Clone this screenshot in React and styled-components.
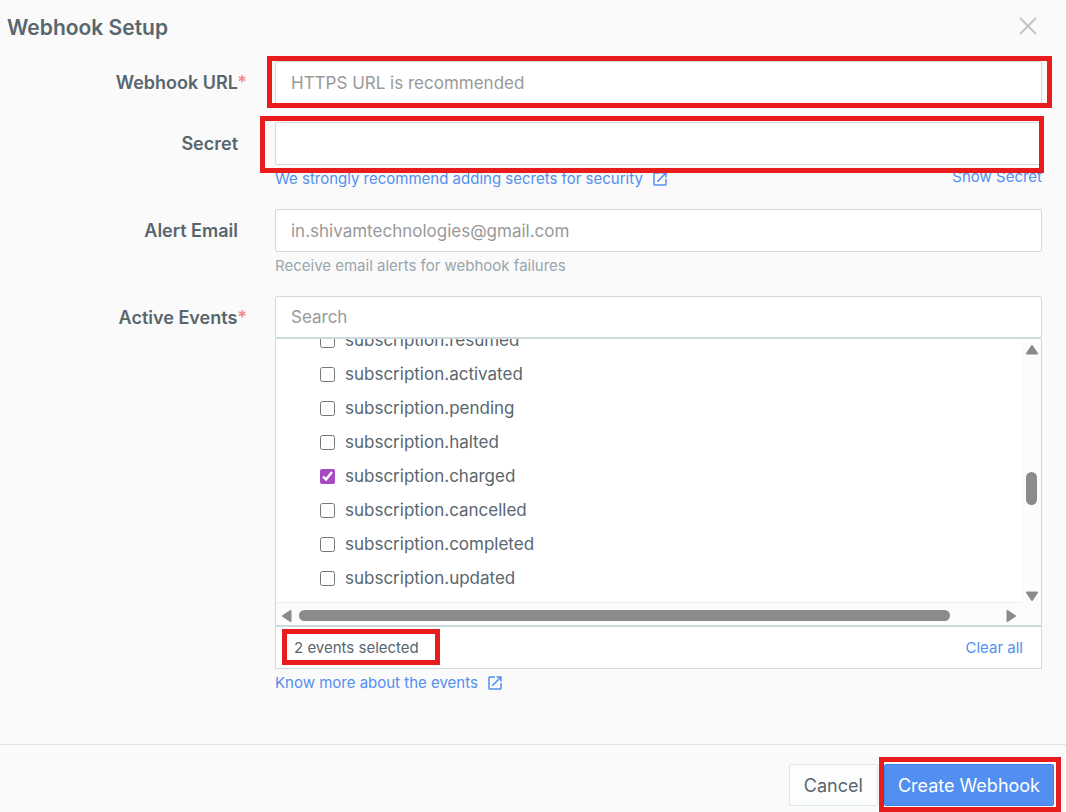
import { useState } from 'react';
import styled, { createGlobalStyle } from 'styled-components';
import { MdOpenInNew } from 'react-icons/md';

const GlobalStyle = createGlobalStyle`
  * {
    box-sizing: border-box;
  }
  body {
    margin: 0;
    background: #fafafa;
    color: #58666e;
    font-family: Inter, "Liberation Sans", sans-serif;
    font-size: 18px;
  }
  input, button {
    font-family: inherit;
    font-size: inherit;
  }
`;

const Dialog = styled.form`
  display: flex;
  flex-direction: column;
  min-height: 100vh;
`;

const Header = styled.header`
  display: flex;
  align-items: center;
  justify-content: space-between;
  height: 52px;
  padding: 0 28px 0 7px;
`;

const Title = styled.h1`
  margin: 0;
  padding-top: 2px;
  font-size: 21px;
  font-weight: 600;
`;

const CloseButton = styled.button`
  display: flex;
  padding: 0;
  border: 0;
  background: none;
  color: #c4c4c4;
  cursor: pointer;
`;

const Body = styled.main`
  display: flex;
  flex: 1;
  flex-direction: column;
  gap: 18px;
  padding: 9px 24px 48px 0;
`;

const Row = styled.div`
  display: grid;
  grid-template-columns: 247px minmax(0, 1fr);
  column-gap: 28px;
`;

const Label = styled.label`
  padding-right: ${(props) => (props.$required ? '0' : '9px')};
  font-weight: 600;
  line-height: 43px;
  text-align: right;
`;

const Star = styled.span`
  color: #f08c8c;
`;

const InputWrap = styled.div`
  position: relative;
`;

const Input = styled.input`
  display: block;
  width: 100%;
  height: ${(props) => props.$height || '43px'};
  padding: 0 15px;
  border: 1px solid #cfdadd;
  border-radius: 2px;
  background: #fff;
  color: #58666e;
  font-size: 17px;
  outline: 0;

  &::placeholder {
    color: #999;
    opacity: 1;
  }
`;

// red frame lying over the thing it points at
const Highlight = styled.span`
  position: absolute;
  z-index: 1;
  inset: ${(props) => props.$inset};
  border: 5px solid #e81c1c;
  pointer-events: none;
`;

const Help = styled.div`
  display: flex;
  justify-content: space-between;
  height: 26px;
  padding-top: 2px;
  color: #98a6ad;
  font-size: 15px;
  line-height: 24px;
`;

const Link = styled.a`
  display: inline-flex;
  align-items: center;
  gap: 8px;
  color: #528ff0;
  text-decoration: none;
`;

const TextButton = styled.button`
  padding: 0;
  border: 0;
  background: none;
  color: #528ff0;
  font-size: 15px;
  line-height: 20px;
  align-self: ${(props) => props.$align || 'center'};
  cursor: pointer;
`;

const EventsBox = styled.div`
  border: 1px solid #cfdadd;
  background: #fff;
`;

const ScrollArea = styled.div`
  display: grid;
  grid-template-columns: minmax(0, 1fr) 19px;
  grid-template-rows: 264px 22px;
  border-bottom: 2px solid #cfdadd;
`;

const EventList = styled.ul`
  display: flex;
  flex-direction: column;
  justify-content: flex-end;
  margin: 0;
  padding: 0 0 7px 44px;
  border-bottom: 1px solid #ececec;
  font-size: 17px;
  list-style: none;
  overflow: hidden;
`;

const EventItem = styled.li`
  flex: none;
`;

const EventLabel = styled.label`
  display: flex;
  align-items: center;
  gap: 10px;
  height: 34px;
`;

const Checkbox = styled.input`
  width: 15px;
  height: 15px;
  margin: 0;
  accent-color: #a84bc2;
`;

const VerticalBar = styled.div`
  display: flex;
  flex-direction: column;
  align-items: center;
  padding: 5px 0 1px;
  background: #fcfcfc;
`;

const HorizontalBar = styled.div`
  display: flex;
  grid-column: 1 / -1;
  align-items: center;
  padding: 3px 24px 0 5px;
  background: #fcfcfc;
`;

const Thumb = styled.div`
  flex: ${(props) => props.$size};
  min-width: 11px;
  border-radius: 6px;
  background: #8b8b8b;
  ${(props) => (props.$vertical ? 'width: 11px;' : 'height: 11px; margin-left: 6px;')}
`;

const Track = styled.div`
  flex: ${(props) => props.$size};
`;

const Arrow = styled.svg`
  flex: none;
  display: block;
  fill: #8b8b8b;
  stroke: #8b8b8b;
  stroke-width: 2;
  stroke-linejoin: round;
`;

const Summary = styled.div`
  display: flex;
  align-items: center;
  justify-content: space-between;
  height: 41px;
  padding: 0 18px;
  font-size: 15px;
`;

const Count = styled.span`
  position: relative;
  line-height: 20px;
`;

const Footer = styled.footer`
  display: flex;
  justify-content: flex-end;
  gap: 6px;
  padding: 19px 12px 6px;
  border-top: 1px solid #e2e5e6;
`;

const Button = styled.button`
  position: relative;
  min-width: 89px;
  height: 42px;
  padding: 0 13px;
  border: 1px solid ${(props) => (props.$primary ? '#3f82ee' : '#dee5e7')};
  border-radius: 2px;
  background: ${(props) => (props.$primary ? '#528ff0' : '#fcfdfd')};
  color: ${(props) => (props.$primary ? '#fff' : '#58666e')};
  cursor: pointer;
`;

const ARROWS = {
  up: 'M6 2 L11 9.5 H1 Z',
  down: 'M6 10 L11 2.5 H1 Z',
  left: 'M2 6 L9.5 1 V11 Z',
  right: 'M10 6 L2.5 1 V11 Z',
};

const ScrollArrow = ({ dir }) => (
  <Arrow width="12" height="12" viewBox="0 0 12 12" aria-hidden="true">
    <path d={ARROWS[dir]} />
  </Arrow>
);

const EVENTS = ['resumed', 'activated', 'pending', 'halted', 'charged', 'cancelled', 'completed', 'updated'];

function App() {
  let [selected, setSelected] = useState(['payment.captured', 'subscription.charged']);
  let [showSecret, setShowSecret] = useState(false);

  const toggle = (name) => {
    setSelected(selected.includes(name) ? selected.filter((e) => e !== name) : [...selected, name]);
  };

  return (
    <Dialog onSubmit={(e) => e.preventDefault()}>
      <GlobalStyle />
      <Header>
        <Title>Webhook Setup</Title>
        <CloseButton type="button" aria-label="Close">
          <svg width="20" height="20" viewBox="0 0 20 20" fill="none" stroke="currentColor" strokeWidth="2">
            <path d="M2 2 L18 18 M18 2 L2 18" />
          </svg>
        </CloseButton>
      </Header>

      <Body>
        <Row>
          <Label htmlFor="url" $required>Webhook URL<Star>*</Star></Label>
          <InputWrap>
            <Input id="url" type="text" placeholder="HTTPS URL is recommended" />
            <Highlight $inset="-5px -10px -4px -8px" />
          </InputWrap>
        </Row>

        <Row>
          <Label htmlFor="secret">Secret</Label>
          <div>
            <InputWrap>
              <Input id="secret" type={showSecret ? 'text' : 'password'} />
              <Highlight $inset="-6px -2px -8px -15px" />
            </InputWrap>
            <Help>
              <Link href="#secrets">
                We strongly recommend adding secrets for security
                <MdOpenInNew size={18} />
              </Link>
              <TextButton type="button" $align="flex-start" onClick={() => setShowSecret(!showSecret)}>
                Show Secret
              </TextButton>
            </Help>
          </div>
        </Row>

        <Row>
          <Label htmlFor="email">Alert Email</Label>
          <div>
            <Input id="email" type="email" placeholder="in.shivamtechnologies@gmail.com" />
            <Help>Receive email alerts for webhook failures</Help>
          </div>
        </Row>

        <Row>
          <Label htmlFor="search" $required>Active Events<Star>*</Star></Label>
          <div>
            <Input id="search" type="text" placeholder="Search" $height="42px" />
            <EventsBox>
              <ScrollArea>
                <EventList>
                  {EVENTS.map((event) => {
                    const name = `subscription.${event}`;
                    return (
                      <EventItem key={name}>
                        <EventLabel>
                          <Checkbox type="checkbox" checked={selected.includes(name)} onChange={() => toggle(name)} />
                          {name}
                        </EventLabel>
                      </EventItem>
                    );
                  })}
                </EventList>
                <VerticalBar>
                  <ScrollArrow dir="up" />
                  <Track $size={116} />
                  <Thumb $vertical $size={33} />
                  <Track $size={85} />
                  <ScrollArrow dir="down" />
                </VerticalBar>
                <HorizontalBar>
                  <ScrollArrow dir="left" />
                  <Thumb $size={651} />
                  <Track $size={55} />
                  <ScrollArrow dir="right" />
                </HorizontalBar>
              </ScrollArea>
              <Summary>
                <Count>
                  {selected.length} events selected
                  <Highlight $inset="-9px -21px -7px -12px" />
                </Count>
                <TextButton type="button" onClick={() => setSelected([])}>Clear all</TextButton>
              </Summary>
            </EventsBox>
            <Help>
              <Link href="#events">
                Know more about the events
                <MdOpenInNew size={18} />
              </Link>
            </Help>
          </div>
        </Row>
      </Body>

      <Footer>
        <Button type="button">Cancel</Button>
        <Button type="submit" $primary>
          Create Webhook
          <Highlight $inset="-8px -8px -7px -6px" />
        </Button>
      </Footer>
    </Dialog>
  );
}

export default App;
